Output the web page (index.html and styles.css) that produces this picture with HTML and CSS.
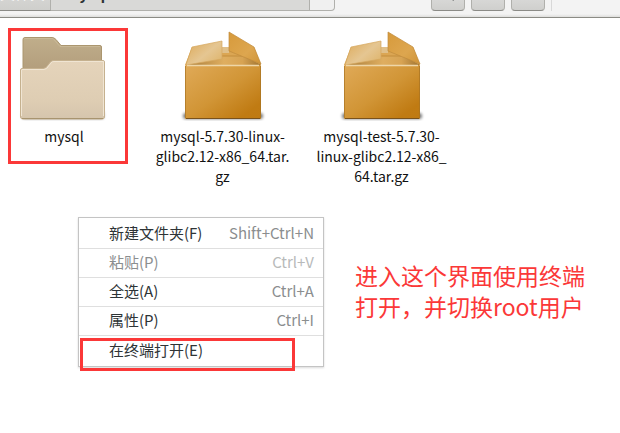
FILE: index.html
```html
<!DOCTYPE html>
<html lang="zh-CN">
<head>
<meta charset="utf-8">
<title>mysql</title>
<link rel="stylesheet" href="styles.css">
</head>
<body>
<header class="toolbar">
  <nav class="path">
    <button class="crumb parent" type="button">文件夹</button>
    <button class="crumb current" type="button">mysql</button>
    <button class="crumb next" type="button" aria-label="›"></button>
  </nav>
  <div class="tools">
    <button class="tool" type="button" aria-label="⌕"><svg width="16" height="16" viewBox="0 0 16 16"><circle cx="6" cy="6" r="4.5" fill="none" stroke="#2e3436" stroke-width="2"/><path d="M9 9l5 6" stroke="#2e3436" stroke-width="2.4"/></svg></button>
    <button class="tool" type="button" aria-label="☰"></button>
    <button class="tool" type="button" aria-label="▾"></button>
    <span class="divider"></span>
  </div>
</header>
<main class="files">
  <svg width="0" height="0" class="defs" aria-hidden="true">
    <defs>
      <linearGradient id="back" x1="0" y1="0" x2="0" y2="1"><stop offset="0" stop-color="#c0ae8b"/><stop offset="1" stop-color="#ad9776"/></linearGradient>
      <linearGradient id="front" x1="0" y1="0" x2="0" y2="1"><stop offset="0" stop-color="#e5d4bb"/><stop offset=".7" stop-color="#decdb3"/><stop offset="1" stop-color="#d5c5ad"/></linearGradient>
      <linearGradient id="box" x1="0" y1="0" x2="1" y2="1"><stop offset="0" stop-color="#e0aa58"/><stop offset=".5" stop-color="#d19536"/><stop offset=".85" stop-color="#c07b13"/><stop offset="1" stop-color="#bf7a12"/></linearGradient>
      <linearGradient id="flapL" x1="0" y1="0" x2="1" y2=".8"><stop offset="0" stop-color="#dda957"/><stop offset=".6" stop-color="#e5c692"/><stop offset="1" stop-color="#dfb66f"/></linearGradient>
      <linearGradient id="flapR" x1="0" y1="0" x2="1" y2="1"><stop offset="0" stop-color="#d79a3b"/><stop offset=".6" stop-color="#dda64f"/><stop offset="1" stop-color="#cf9438"/></linearGradient>
      <linearGradient id="inside" x1="0" y1="0" x2="1" y2="0"><stop offset="0" stop-color="#a77b39"/><stop offset=".5" stop-color="#dfae60"/><stop offset=".75" stop-color="#d7a353"/><stop offset="1" stop-color="#9e722f"/></linearGradient>
      <filter id="soft" x="-20%" y="-100%" width="140%" height="300%"><feGaussianBlur stdDeviation="1.8"/></filter>
      <symbol id="package" viewBox="0 0 96 96">
        <rect x="8" y="88" width="80" height="6" rx="3" fill="#000" opacity=".55" filter="url(#soft)"/>
        <path d="M17 22H79L86 40H10Z" fill="#dba653"/>
        <path d="M46 22H54V28H46Z" fill="#e0c08a"/>
        <path d="M40 31H70L86 40H12Z" fill="url(#inside)"/>
        <path d="M46 31H67" stroke="#c28d3c"/>
        <path d="M17 22L47 16V34L11 40Z" fill="url(#flapL)" stroke="#d5a75f" stroke-width=".7"/>
        <path d="M54 7L79 22L86 39L54 26Z" fill="url(#flapR)" stroke="#c08b3c" stroke-width=".7"/>
        <rect x="10" y="40" width="76" height="54" rx="1" fill="url(#box)"/>
        <path d="M10.500 41V93M85.500 41V93" stroke="#a87424" stroke-width="1" opacity=".7"/>
        <path d="M11 93.500H85" stroke="#79521c"/>
        <path d="M12 40.500H84" stroke="#eed6a8" stroke-width="1.400"/>
      </symbol>
    </defs>
  </svg>
  <figure class="file">
    <svg class="icon" viewBox="1 1 96 96" aria-hidden="true">
      <rect x="7" y="87" width="82" height="8" rx="3" fill="#000" opacity=".38" filter="url(#soft)"/>
      <path d="M8 60V15.500Q8 13.500 10 13.500H37Q39 13.500 41 15.500L46 21.500H85Q86.500 21.500 86.500 23V60Z" fill="url(#back)" stroke="#ab966f"/>
      <path d="M9 15Q9 14.500 11 14.500H38L45 22.500H85" fill="none" stroke="#cdbd9c" opacity=".7"/>
      <path d="M5.500 46Q5.500 44.500 7 44.500H28Q31 44.500 33 41L35 38.500Q36 36.500 39 36.500H88Q89.500 36.500 89.500 38V93Q89.500 95 87 95H8Q5.500 95 5.500 93Z" fill="url(#front)" stroke="#c5b18f"/>
      <path d="M6.500 92V46Q6.500 45.500 8 45.500H29Q32 45.500 34 41.500L36 39Q37 37.500 39 37.500H88.500V92" fill="none" stroke="#f0e5d3"/>
      <path d="M7 94.500H88" stroke="#a8946f"/>
    </svg>
    <figcaption>mysql</figcaption>
  </figure>
  <figure class="file">
    <svg class="icon" aria-hidden="true"><use href="#package"/></svg>
    <figcaption>mysql-5.7.30-linux-<br>glibc2.12-x86_64.tar.<br>gz</figcaption>
  </figure>
  <figure class="file">
    <svg class="icon" aria-hidden="true"><use href="#package"/></svg>
    <figcaption>mysql-test-5.7.30-<br>linux-glibc2.12-x86_<br>64.tar.gz</figcaption>
  </figure>
</main>
<div class="menu" role="menu">
  <button type="button" role="menuitem"><span>新建文件夹(F)</span><kbd>Shift+Ctrl+N</kbd></button>
  <button type="button" role="menuitem" disabled><span>粘贴(P)</span><kbd>Ctrl+V</kbd></button>
  <button type="button" role="menuitem"><span>全选(A)</span><kbd>Ctrl+A</kbd></button>
  <button type="button" role="menuitem"><span>属性(P)</span><kbd>Ctrl+I</kbd></button>
  <button type="button" role="menuitem"><span>在终端打开(E)</span></button>
</div>
<div class="mark mark-folder"></div>
<div class="mark mark-terminal"></div>
<p class="note">进入这个界面使用终端<br>打开，并切换root用户</p>
</body>
</html>
```
FILE: styles.css
```css
* { box-sizing: border-box; }
body {
  margin: 0;
  min-height: 100vh;
  background: #fff;
  color: #111;
  font-family: "Noto Sans CJK SC", sans-serif;
  font-size: 15px;
}
button { font: inherit; color: inherit; margin: 0; }
.toolbar {
  display: flex;
  align-items: flex-end;
  height: 18px;
  padding-bottom: 6px;
  overflow: hidden;
  background: linear-gradient(#f3f3f3 14px, #dededc 17px);
  border-bottom: 1px solid #8b8b85;
}
.path { display: flex; width: 335px; }
.crumb {
  height: 32px;
  padding: 0 0 4px;
  border: 1px solid #b0b0ac;
  border-left: 0;
  line-height: 26px;
  white-space: nowrap;
}
.parent {
  width: 51px;
  padding-right: 5px;
  border-bottom-color: #8b8b87;
  background: linear-gradient(#dededc, #cfcfcc);
  color: #fff;
}
.current {
  flex: 1;
  padding-left: 14px;
  text-align: left;
  background: #d9d9d7;
  color: #2e3436;
  font-weight: bold;
}
.next {
  width: 25px;
  border-radius: 0 4px 4px 0;
  background: #f0f0f0;
}
.tools { display: flex; gap: 6px; margin-left: 96px; }
.tool {
  display: grid;
  place-items: center;
  width: 34px;
  height: 32px;
  padding: 0 0 4px;
  border: 1px solid #b0b0ac;
  border-bottom-color: #8b8b87;
  border-radius: 4px;
  background: linear-gradient(#e8e8e7, #cfcfcd);
}
.divider { width: 1px; background: #d8d8d8; }
.files {
  display: flex;
  padding-top: 7px;
}
.defs { position: absolute; }
.file {
  width: 159px;
  margin: 0;
  text-align: center;
}
.file:first-of-type { width: 143px; padding-right: 15px; }
.icon { display: block; width: 96px; height: 96px; margin: 0 auto 5px; }
figcaption { line-height: 20px; font-size: 14px; }
.menu {
  position: absolute;
  left: 78px;
  top: 217px;
  width: 246px;
  padding: 2px 0 1px;
  border: 1px solid #c4c4c4;
  background: #fff;
  box-shadow: 0 1px 2px rgba(0, 0, 0, .15);
  color: #2e3436;
}
.menu button {
  display: flex;
  justify-content: space-between;
  align-items: center;
  width: 100%;
  height: 29px;
  padding: 0 9px 3px 30px;
  border: 0;
  border-bottom: 1px solid #dfdfdf;
  background: none;
}
.menu button:last-child { border-bottom: 0; }
.menu kbd { font: inherit; color: #8b8e8f; }
.menu button:disabled { color: #8b8e8f; }
.menu button:disabled kbd { color: #b8baba; }
.mark { position: absolute; border: 3px solid #fb3838; }
.mark-folder { left: 8px; top: 28px; width: 120px; height: 136px; }
.mark-terminal { left: 80px; top: 338px; width: 215px; height: 33px; }
.note {
  position: absolute;
  left: 355px;
  top: 260px;
  margin: 0;
  color: #fb3838;
  font-size: 23px;
  line-height: 31px;
}
```
